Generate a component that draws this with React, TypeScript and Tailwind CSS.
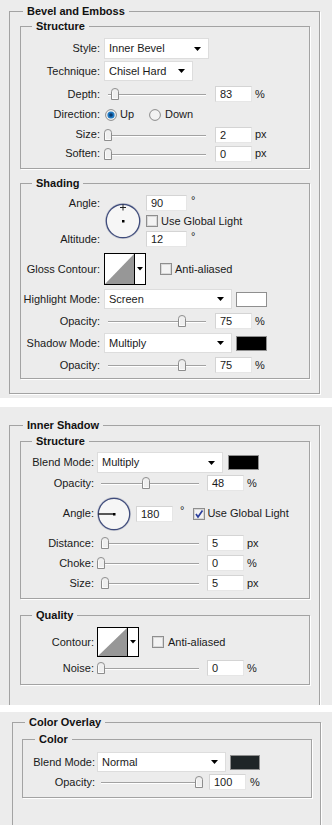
import React from "react";

type Kids = { children?: React.ReactNode };

function Arrow() {
  return (
    <svg width="7" height="4" viewBox="0 0 7 4" className="shrink-0">
      <path d="M0 0H7L3.5 4Z" fill="#000" />
    </svg>
  );
}

function Dropdown({ text, cls }: { text: string; cls: string }) {
  return (
    <div className={`flex shrink-0 items-center justify-between border border-[#dddddd] bg-white pl-[4px] pr-[7px] ${cls}`}>
      <span>{text}</span>
      <Arrow />
    </div>
  );
}

function Field({ v, cls }: { v: string; cls: string }) {
  return (
    <div className={`h-[16px] shrink-0 border border-[#e6e6e6] border-l-[#d4d4d4] border-t-[#d4d4d4] bg-white pl-[4px] leading-[14px] ${cls}`}>
      {v}
    </div>
  );
}

function Thumb({ x }: { x: number }) {
  return (
    <svg width="8" height="12" viewBox="0 0 8 12" className="absolute top-[1px]" style={{ left: x - 4 }}>
      <path d="M0.5 3.5Q0.5 0.5 4 0.5Q7.5 0.5 7.5 3.5V11.5H0.5Z" fill="#efefef" stroke="#8d8d8d" />
      <path d="M1.5 4V10.5H6.5" fill="none" stroke="#ffffff" strokeWidth="0.8" />
    </svg>
  );
}

function Slider({ cls, x }: { cls: string; x: number }) {
  return (
    <div className={`relative h-[14px] shrink-0 ${cls}`}>
      <div className="absolute left-[4px] right-[4px] top-[7px] h-px bg-[#a2a2a2] shadow-[0_1px_0_#ffffff]" />
      <Thumb x={x} />
    </div>
  );
}

function Check({ on }: { on?: boolean }) {
  return (
    <svg width="12" height="12" viewBox="0 0 12 12" className="shrink-0">
      <rect x="0.5" y="0.5" width="11" height="11" fill="#f3f3f3" stroke="#8e8e8e" />
      <rect x="1.5" y="1.5" width="9" height="9" fill="none" stroke="#d8d8d8" />
      {on && <path d="M3 6L5 9L9.5 2.5" fill="none" stroke="#2c3f9c" strokeWidth="1.7" />}
    </svg>
  );
}

function Radio({ on }: { on?: boolean }) {
  return (
    <svg width="12" height="12" viewBox="0 0 12 12" className="shrink-0">
      <circle cx="6" cy="6" r="5.4" fill="#f3f3f3" stroke="#8a8a8a" />
      {on && (
        <>
          <circle cx="6" cy="6" r="3.6" fill="#1e78c2" />
          <circle cx="6" cy="6" r="1.8" fill="#0b3a6e" />
        </>
      )}
    </svg>
  );
}

function Dial({ size, mode }: { size: number; mode: "up" | "left" }) {
  const r = size / 2;
  return (
    <svg width={size} height={size} viewBox={`0 0 ${size} ${size}`} className="shrink-0">
      <circle cx={r} cy={r} r={r - 1} fill="#f6f6f6" stroke="#c9cbd3" strokeWidth="2" />
      <circle cx={r} cy={r} r={r - 1.3} fill="none" stroke="#3f4c7c" strokeWidth="1.2" />
      {mode === "up" ? (
        <path d={`M${r - 3} 4.5H${r + 3}M${r} 1.5V7.5`} stroke="#222" strokeWidth="1" />
      ) : (
        <path d={`M1.5 ${r}H${r}`} stroke="#000" strokeWidth="1.3" />
      )}
      <rect x={r - 1} y={r - 1} width="2.5" height="2.5" fill="#000" />
    </svg>
  );
}

function Contour({ cw, h }: { cw: number; h: number }) {
  const w = cw + 12;
  return (
    <svg width={w} height={h} viewBox={`0 0 ${w} ${h}`} className="shrink-0">
      <rect x="0.5" y="0.5" width={w - 1} height={h - 1} fill="#ffffff" stroke="#000" />
      <path d={`M1 ${h - 1}L${cw} 1V${h - 1}Z`} fill="#979797" />
      <path d={`M${cw + 0.5} 0V${h}`} stroke="#000" />
      <path d={`M${cw + 3} ${h / 2 - 2}H${cw + 9}L${cw + 6} ${h / 2 + 1.5}Z`} fill="#000" />
    </svg>
  );
}

function Group({ title, cls, lcls, children }: { title: string; cls: string; lcls: string } & Kids) {
  return (
    <fieldset className={`border border-[#a3a3a3] shadow-[1px_1px_0_#ffffff] ${cls}`}>
      <legend className={`px-[4px] text-[11px] font-bold leading-[13px] text-[#111111] ${lcls}`}>{title}</legend>
      {children}
    </fieldset>
  );
}

function Row({ label, lw, cls, children }: { label: string; lw: string; cls: string } & Kids) {
  return (
    <div className={`flex items-center ${cls}`}>
      <div className={`shrink-0 text-right ${lw}`}>{label}</div>
      {children}
    </div>
  );
}

const L1 = "w-[79px] mr-[4px]";
const L2 = "w-[73px] mr-[3px]";
const L3 = "w-[72px] mr-[2px]";

function Unit({ u }: { u: string }) {
  return <span className="ml-[3px]">{u}</span>;
}

function BevelPanel() {
  return (
    <div className="h-[398px] overflow-hidden bg-[#ececec] pt-[5px]">
      <Group title="Bevel and Emboss" cls="ml-[9px] w-[311px] pb-[14px]" lcls="ml-[13px]">
        <Group title="Structure" cls="ml-[10px] mt-[2px] w-[290px] pb-[5px]" lcls="ml-[11px]">
          <Row label="Style:" lw={L1} cls="mt-[5px] h-[21px]">
            <Dropdown text="Inner Bevel" cls="w-[105px] h-[21px]" />
          </Row>
          <Row label="Technique:" lw={L1} cls="mt-[2px] h-[20px]">
            <Dropdown text="Chisel Hard" cls="w-[89px] h-[20px]" />
          </Row>
          <Row label="Depth:" lw={L1} cls="mt-[3px] h-[20px]">
            <Slider cls="w-[106px]" x={11} />
            <Field v="83" cls="ml-[5px] w-[37px]" />
            <Unit u="%" />
          </Row>
          <Row label="Direction:" lw={L1} cls="mt-[1px] h-[19px]">
            <span className="ml-[1px] flex items-center">
              <Radio on />
              <span className="ml-[3px]">Up</span>
            </span>
            <span className="ml-[15px] flex items-center">
              <Radio />
              <span className="ml-[4px]">Down</span>
            </span>
          </Row>
          <Row label="Size:" lw={L1} cls="mt-[1px] h-[19px]">
            <Slider cls="w-[106px]" x={4} />
            <Field v="2" cls="ml-[5px] w-[37px]" />
            <Unit u="px" />
          </Row>
          <Row label="Soften:" lw={L1} cls="h-[19px]">
            <Slider cls="w-[106px]" x={4} />
            <Field v="0" cls="ml-[5px] w-[37px]" />
            <Unit u="px" />
          </Row>
        </Group>
        <Group title="Shading" cls="ml-[10px] mt-[8px] w-[290px] pb-[3px]" lcls="ml-[11px]">
          <div className="mt-[4px] grid grid-cols-[79px_36px_auto] grid-rows-[18px_18px_18px] gap-x-[5px]">
            <div className="col-start-1 row-start-1 flex items-center justify-end">Angle:</div>
            <div className="col-start-2 row-span-3 row-start-1 flex items-center">
              <Dial size={36} mode="up" />
            </div>
            <div className="col-start-3 row-start-1 flex items-center">
              <Field v="90" cls="w-[41px]" />
              <span className="ml-[4px] self-start">°</span>
            </div>
            <div className="col-start-3 row-start-2 flex items-center">
              <Check />
              <span className="ml-[3px]">Use Global Light</span>
            </div>
            <div className="col-start-1 row-start-3 flex items-center justify-end">Altitude:</div>
            <div className="col-start-3 row-start-3 flex items-center">
              <Field v="12" cls="w-[41px]" />
              <span className="ml-[4px] self-start">°</span>
            </div>
          </div>
          <Row label="Gloss Contour:" lw={L1} cls="mt-[5px] h-[32px]">
            <Contour cw={30} h={32} />
            <span className="ml-[14px]">
              <Check />
            </span>
            <span className="ml-[3px]">Anti-aliased</span>
          </Row>
          <Row label="Highlight Mode:" lw={L1} cls="mt-[4px] h-[20px]">
            <Dropdown text="Screen" cls="w-[128px] h-[20px]" />
            <div className="ml-[4px] h-[15px] w-[31px] border border-[#8f8f8f] bg-white" />
          </Row>
          <Row label="Opacity:" lw={L1} cls="mt-[2px] h-[20px]">
            <Slider cls="w-[106px]" x={78} />
            <Field v="75" cls="ml-[5px] w-[37px]" />
            <Unit u="%" />
          </Row>
          <Row label="Shadow Mode:" lw={L1} cls="mt-[2px] h-[20px]">
            <Dropdown text="Multiply" cls="w-[128px] h-[20px]" />
            <div className="ml-[4px] h-[15px] w-[31px] border border-[#8f8f8f] bg-black" />
          </Row>
          <Row label="Opacity:" lw={L1} cls="mt-[2px] h-[20px]">
            <Slider cls="w-[106px]" x={78} />
            <Field v="75" cls="ml-[5px] w-[37px]" />
            <Unit u="%" />
          </Row>
        </Group>
      </Group>
    </div>
  );
}

function InnerShadowPanel() {
  return (
    <div className="mt-[9px] h-[298px] overflow-hidden bg-[#ececec] pt-[12px]">
      <Group title="Inner Shadow" cls="ml-[9px] w-[311px] pb-[40px]" lcls="ml-[13px]">
        <Group title="Structure" cls="ml-[10px] mt-[3px] w-[290px] pb-[5px]" lcls="ml-[11px]">
          <Row label="Blend Mode:" lw={L2} cls="mt-[4px] h-[21px]">
            <Dropdown text="Multiply" cls="w-[126px] h-[21px]" />
            <div className="ml-[5px] h-[15px] w-[31px] border border-[#8f8f8f] bg-black" />
          </Row>
          <Row label="Opacity:" lw={L2} cls="h-[20px]">
            <Slider cls="w-[106px]" x={49} />
            <Field v="48" cls="ml-[4px] w-[37px]" />
            <Unit u="%" />
          </Row>
          <Row label="Angle:" lw={L2} cls="mt-[3px] h-[35px]">
            <Dial size={34} mode="left" />
            <Field v="180" cls="ml-[5px] w-[37px]" />
            <span className="ml-[7px] self-start pt-[8px]">°</span>
            <span className="ml-[9px]">
              <Check on />
            </span>
            <span className="ml-[2px]">Use Global Light</span>
          </Row>
          <Row label="Distance:" lw={L2} cls="mt-[2px] h-[20px]">
            <Slider cls="w-[106px]" x={8} />
            <Field v="5" cls="ml-[4px] w-[37px]" />
            <Unit u="px" />
          </Row>
          <Row label="Choke:" lw={L2} cls="h-[20px]">
            <Slider cls="w-[106px]" x={4} />
            <Field v="0" cls="ml-[4px] w-[37px]" />
            <Unit u="%" />
          </Row>
          <Row label="Size:" lw={L2} cls="h-[20px]">
            <Slider cls="w-[106px]" x={8} />
            <Field v="5" cls="ml-[4px] w-[37px]" />
            <Unit u="px" />
          </Row>
        </Group>
        <Group title="Quality" cls="ml-[10px] mt-[10px] w-[290px] pb-[6px]" lcls="ml-[11px]">
          <Row label="Contour:" lw={L2} cls="mt-[5px] h-[30px]">
            <Contour cw={30} h={30} />
            <span className="ml-[13px]">
              <Check />
            </span>
            <span className="ml-[4px]">Anti-aliased</span>
          </Row>
          <Row label="Noise:" lw={L2} cls="mt-[1px] h-[20px]">
            <Slider cls="w-[106px]" x={4} />
            <Field v="0" cls="ml-[4px] w-[37px]" />
            <Unit u="%" />
          </Row>
        </Group>
      </Group>
    </div>
  );
}

function ColorOverlayPanel() {
  return (
    <div className="mt-[7px] h-[113px] overflow-hidden bg-[#ececec] pt-[4px]">
      <Group title="Color Overlay" cls="ml-[12px] w-[309px] pb-[40px]" lcls="ml-[12px]">
        <Group title="Color" cls="ml-[9px] mt-[4px] w-[290px] pb-[5px]" lcls="ml-[12px]">
          <Row label="Blend Mode:" lw={L3} cls="mt-[6px] h-[20px]">
            <Dropdown text="Normal" cls="w-[129px] h-[20px]" />
            <div className="ml-[4px] h-[15px] w-[30px] border border-[#8f8f8f] bg-[#1f2527]" />
          </Row>
          <Row label="Opacity:" lw={L3} cls="h-[20px]">
            <Slider cls="w-[108px]" x={102} />
            <Field v="100" cls="ml-[4px] w-[37px]" />
            <span className="ml-[4px]">%</span>
          </Row>
        </Group>
      </Group>
    </div>
  );
}

export default function App() {
  return (
    <div className="h-[825px] w-[332px] overflow-hidden bg-white text-[11px] leading-[13px] text-[#1a1a1a] [font-family:'Liberation_Sans',Arial,sans-serif]">
      <BevelPanel />
      <InnerShadowPanel />
      <ColorOverlayPanel />
    </div>
  );
}
